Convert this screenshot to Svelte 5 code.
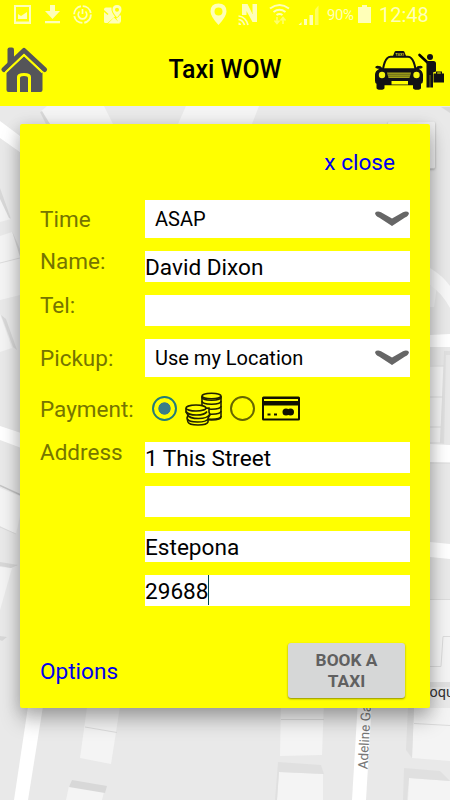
<script lang="ts">
  let time = 'ASAP';
  let name = 'David Dixon';
  let tel = '';
  let pickup = 'Use my Location';
  let payment = 'cash';
  let address = ['1 This Street', '', 'Estepona', '29688'];
  const activeLine = 3;

  const coins = [24, 19, 14, 9, 5];

  // city blocks and streets, in screen coordinates
  const blocks = [
    '40,112 47,106 104,106 113,124 50,124',
    '186,106 259,106 252,124 178,124',
    '0,197 11,219 0,222',
    '0,236 12,232 24,262 24,294 0,300',
    '0,314 12,348 0,352',
    '0,488 24,498 16,534 0,526',
    '0,567 12,568 0,610',
    '88,700 121,700 111,764 80,758',
    '69,786 104,792 102,800 66,800',
    '281,700 324,700 322,755 280,756',
    '279,772 323,774 323,800 277,800',
    '414,708 450,708 450,761 412,758',
    '409,778 450,781 450,800 408,800',
    '430,600 450,600 450,682 430,682',
    '430,365 444,366 440,442 430,442',
    '425,285 437,286 434,307 425,307'
  ];
  const shades = [
    '40,112 42,111 50,124 46,124',
    '0,188 11,219 9,218 0,199',
    '12,231 24,258 24,270',
    '1,315 6,319 17,350 13,347',
    '0,562 18,565 11,568 0,566',
    '0,636 7,637 2,641 0,640',
    '72,780 107,786 105,793 69,787',
    '441,107 450,107 450,113'
  ];
  const softShades = [
    '278,762 321,765 324,774 279,772 277,800 275,800',
    '404,768 440,771 450,781 409,778 407,800 403,800',
    '408,708 414,708 412,758 406,750',
    '444,351 450,351 450,355 446,355 444,444 440,443',
    '430,682 450,682 450,687 430,687'
  ];
  const streets = [
    '0,121 24,139 24,155 0,138',
    '0,426 24,434 24,449 0,440',
    '29,700 44,700 28,800 14,800',
    '358,700 372,700 366,800 352,800',
    '430,335 450,334 450,347 430,347',
    '430,444 450,445 450,463 430,462',
    '430,542 450,544 450,559 430,557'
  ];
</script>

<div class="screen">
  <svg class="map" viewBox="0 0 450 800">
    <rect width="450" height="800" fill="#e9e9e9" />
    {#each blocks as points}
      <polygon {points} fill="#f4f4f4" />
    {/each}
    {#each shades as points}
      <polygon {points} fill="#d8d8d8" />
    {/each}
    {#each softShades as points}
      <polygon {points} fill="#e0e0e0" />
    {/each}
    {#each streets as points}
      <polygon {points} fill="#fff" />
    {/each}
    <path d="M430 268q13 8 20 18v22q-8-15-20-23z" fill="#f8f8f8" />
    <path
      d="M85 727l32 5.500M281 719.500h43M414 723.500l36 2M430 599.500h20M450 636.500h-7l-2 30h-11M0 527l16 7M0 263l24-6M430 366h14M430 397h13M430 427h11M430 463h20"
      fill="none" stroke="#dcdcdc"
    />
    <path d="M0 485.500l24 11" stroke="#c4c4c4" stroke-width="1.500" />
    <rect class="map-btn" x="388" y="121.500" width="47" height="47" rx="1.500" />
    <text class="place" x="429.500" y="697">oqu</text>
    <text class="road" transform="translate(367.500 769.500) rotate(-87)">Adeline Gardens</text>
  </svg>

  <header>
    <div class="status-bar">
      <svg class="notifications" width="125" height="28" viewBox="0 0 125 28" fill="#ffffb8">
        <path fill-rule="evenodd" d="M14 5h17v19H14zM16 7v14.500h13V7z" />
        <path d="M18 19v-5l3 2 6-4v7z" />
        <path d="M50 5h5v6h5l-7.500 8-7.500-8h5zM45 21h15v2.200H45z" />
        <circle cx="82.500" cy="14.500" r="8.400" fill="none" stroke="#ffffb8" stroke-width="1.900" stroke-dasharray="11.300 1.900" />
        <path d="M79.500 11.500a4.300 4.300 0 1 0 6 0M82.500 9v5" fill="none" stroke="#ffffb8" stroke-width="1.700" />
        <path fill-rule="evenodd" d="M106 7.500h5.500q-.5 5 3.500 9l-7.500 6.500h-2q-1.500 0-1.500-1.500V9.500q0-2 2-2zM104 10v2l3.500 3 1-1z" />
        <path d="M108 23.500l6-6 6 6zM116 18q1.500 1 4-3l1 1v5q0 2-2 2z" />
        <path fill-rule="evenodd" d="M117 5q4.500 0 4.500 4.500 0 3-4.500 8-4.500-5-4.500-8Q112.500 5 117 5zm0 2.800a2 2 0 1 0 0 4 2 2 0 0 0 0-4z" />
      </svg>
      <svg class="signals" width="115" height="28" viewBox="210 0 115 28" fill="#ffffb8">
        <path fill-rule="evenodd" d="M218.500 3.500q8 0 8 8 0 5-8 13.500-8-8.500-8-13.500 0-8 8-8zm0 4a4 4 0 1 0 0 8 4 4 0 0 0 0-8z" />
        <path d="M242 4h5.500l5 10V4h4.500v18h-4.500l-6-11v4H242z" />
        <path d="M238.500 16q7.500 1 9.500 9M238.500 19.500q4.500.5 6 5.500" fill="none" stroke="#ffffb8" stroke-width="1.700" />
        <path d="M238.500 22.500q2.500 0 2.500 2.500h-2.500z" />
        <path d="M270 8.500q9.500-7 19 0M273.500 12q6-4.500 12 0M276.500 15q3-2.200 6 0" fill="none" stroke="#ffffb8" stroke-width="2" />
        <path d="M277 17v6M274.500 20.500l2.500 3 2.500-3M283 24v-6M280.500 20.500l2.500-3 2.500 3" fill="none" stroke="#ffff6a" stroke-width="1.600" />
        <path d="M298.500 25l3-3v3zM304 19h3v6h-3zM309.500 15h3.500v10h-3.500z" />
        <path d="M315 9.500l3.500-4V25H315z" opacity=".5" />
      </svg>
      <span class="percent">90%</span>
      <svg class="battery" width="13" height="20" viewBox="0 0 13 20" fill="#ffffb8">
        <path d="M4 1h5v2h4v16H0V3h4z" />
      </svg>
      <span class="clock">12:48</span>
    </div>

    <div class="title-bar">
      <svg width="48" height="48" viewBox="0 0 48 48">
        <path d="M7.500 18V3.500q0-2 2-2h2.500q2 0 2 2v9z" fill="#555559" />
        <path d="M4 23.500L24 4.500l20.500 19" fill="none" stroke="#555559" stroke-width="5" stroke-linecap="round" stroke-linejoin="round" />
        <path d="M6.500 26.500L24 10l18.500 16.500V44q0 2-2 2H31V31q0-4-7-4t-7 4v15H8.500q-2 0-2-2z" fill="#555559" />
        <path d="M5.500 26.500L24 9l18.500 17.500" fill="none" stroke="#ffff00" stroke-width="2" />
        <path d="M18 46V32q0-4 6-4t6 4v14z" fill="#ffff00" />
        <path d="M20 46V32q0-2 4-2t4 2v14z" fill="#555559" />
      </svg>
      <h1>Taxi WOW</h1>
      <svg class="cab" width="72" height="42" viewBox="373 49 72 42">
        <path d="M393 56l1.500-4q.3-1 1.500-1h7q1.200 0 1.500 1l1.500 4z" />
        <text x="399.500" y="55.500" class="cab-sign">TAXI</text>
        <path class="window" d="M383 69q1.500-8.500 4.500-11 1-1.300 3-1.300h17.500q2 0 3 1.300 3 2.500 4.500 11" />
        <path d="M375.300 67.500q0-1.700 2-1.700 3.700 0 5.200 2.400h33q1.500-2.400 5.200-2.400 2 0 2 1.700-1 1.300-4 1.300 4 2 4.300 6v6q0 2.500-2 3v4q0 2-4 2t-4-2v-2.500h-28.500v2.500q0 2-4 2t-4-2v-4q-1.500-.5-1.500-3v-6q0-4 4.500-6-4-.2-4.200-1.300z" />
        <path d="M387 72.500h24l-1.500 5.500h-21z" fill="#a5a51a" />
        <path d="M387.500 74.300h23M388 76.200h22" stroke="#55551a" stroke-width=".7" />
        <circle cx="382" cy="75" r="3.200" fill="#f5f510" />
        <circle cx="416.500" cy="75" r="3.200" fill="#f5f510" />
        <path d="M391.500 81h16.500v3.500h-16.500z" fill="#ffff00" />
        <circle cx="430" cy="57" r="3" />
        <path d="M419.500 55l8 7.500" fill="none" stroke="#000" stroke-width="2.600" stroke-linecap="round" />
        <path d="M426.500 61h7q2.500 0 2.500 2.500v8l-3 1v15h-2.800V75h-.4v12.500h-3.300z" />
        <path fill-rule="evenodd" d="M435 73.500h-1.500v9H444v-9h-2v-2h-6v2zm2.200 0v-1h3.600v1z" />
      </svg>
    </div>
  </header>

  <main class="card">
    <div class="close-row">
      <a href="#close">x close</a>
    </div>

    <form>
      <div class="row tall">
        <label for="time">Time</label>
        <div class="select" id="time">
          <span>{time}</span>
          <svg width="34" height="18" viewBox="0 0 34 18">
            <path d="M0 3q2-2.500 6-.8L17 8.500l11-6.300q4-1.700 6 .8-.5 3-4 4.500L17 16 4 7.500Q.5 6 0 3z" />
          </svg>
        </div>
      </div>

      <div class="row">
        <label for="name">Name:</label>
        <div class="input" id="name">{name}</div>
      </div>

      <div class="row">
        <label for="tel">Tel:</label>
        <div class="input" id="tel">{tel}</div>
      </div>

      <div class="row tall">
        <label for="pickup">Pickup:</label>
        <div class="select" id="pickup">
          <span>{pickup}</span>
          <svg width="34" height="18" viewBox="0 0 34 18">
            <path d="M0 3q2-2.500 6-.8L17 8.500l11-6.300q4-1.700 6 .8-.5 3-4 4.500L17 16 4 7.500Q.5 6 0 3z" />
          </svg>
        </div>
      </div>

      <div class="row payment">
        <span class="label">Payment:</span>
        <button type="button" class="radio" class:checked={payment === 'cash'} aria-label="Cash" on:click={() => payment = 'cash'}></button>
        <svg class="coins" width="37" height="34" viewBox="0 0 37 34">
          <path d="M17 4v21q0 3 9.500 3t9.500-3V4" class="stack" />
          {#each coins as y}
            <path d="M17 {y}q0 3.200 9.500 3.200T36 {y}" />
          {/each}
          <ellipse cx="26.500" cy="4" rx="9.500" ry="2.800" />
          <path class="stack" d="M1 17v3l2 3-1 3 1 4q1 3 10 3t10-3v-4l2-3-1-3v-4z" />
          <path d="M2.500 27q1 3 10 3t10.500-3M2.500 23q2 3.500 11 3.500t11-4M1 19.500q2 3.500 10.500 3.500t10.500-3.500" />
          <ellipse cx="11" cy="16" rx="10" ry="3" class="stack" />
        </svg>
        <button type="button" class="radio" class:checked={payment === 'card'} aria-label="Card" on:click={() => payment = 'card'}></button>
        <svg class="credit" width="38" height="25" viewBox="0 0 38 25">
          <path fill-rule="evenodd" d="M1.500.5h35q1.500 0 1.500 1.500v21q0 1.500-1.500 1.500h-35Q0 24.500 0 23V2Q0 .5 1.500.5zM2 3v2h34V3zM2 9.500v13h34v-13z" />
          <path d="M5.500 17.500h3v2h-3zM12 17.500h3v2h-3z" />
          <circle cx="24" cy="16" r="3.500" />
          <circle cx="28.500" cy="16" r="3.500" />
        </svg>
      </div>

      <div class="row">
        <span class="label">Address</span>
        <div class="lines">
          {#each address as line, i}
            <div class="input" class:focused={i === activeLine}>{line}</div>
          {/each}
        </div>
      </div>
    </form>

    <footer>
      <a href="#options">Options</a>
      <button class="book">BOOK A TAXI</button>
    </footer>
  </main>
</div>

<style>
  :global(body) {
    margin: 0;
    font-family: Roboto, "Liberation Sans", sans-serif;
    background: #e9e9e9;
  }

  .screen {
    position: relative;
    width: 450px;
    height: 800px;
    overflow: hidden;
  }

  .map {
    position: absolute;
    inset: 0;
    width: 450px;
    height: 800px;
  }

  .map-btn {
    fill: #f0f0f0;
    filter: drop-shadow(0 1px 1px rgba(0, 0, 0, 0.3));
  }

  .place {
    font-size: 14.5px;
    fill: #333;
  }

  .road {
    font-size: 13.5px;
    fill: #777;
  }

  header {
    position: relative;
    height: 106px;
    background: #ffff00;
  }

  .status-bar {
    display: flex;
    align-items: flex-start;
    height: 30px;
    color: #ffffb8;
  }

  .signals {
    margin-left: 85px;
  }

  .percent {
    width: 29px;
    margin: 6px 0 0 2px;
    font-size: 15px;
    line-height: 18px;
    letter-spacing: -0.4px;
  }

  .battery {
    margin: 4px 0 0 2px;
  }

  .clock {
    margin: 3px 0 0 8px;
    font-size: 20px;
    line-height: 24px;
  }

  .title-bar {
    display: flex;
    align-items: center;
    justify-content: space-between;
    height: 76px;
    padding-right: 5px;
    box-sizing: border-box;
  }

  .title-bar svg {
    margin-top: 4px;
  }

  .cab {
    fill: #111115;
  }

  .window {
    fill: #ffff00;
    stroke: #111115;
    stroke-width: 2;
  }

  h1 {
    margin: 2px 0 0 29px;
    font-size: 24.9px;
    font-weight: 500;
    color: #000;
  }

  .cab-sign {
    font-size: 4px;
    font-weight: 700;
    text-anchor: middle;
    fill: #d8d823;
  }

  .card {
    position: relative;
    width: 410px;
    height: 584.5px;
    margin: 17.5px 20px 0;
    padding: 0 20px;
    box-sizing: border-box;
    border-radius: 2px;
    background: #ffff00;
    box-shadow: 0 12px 20px rgba(0, 0, 0, 0.26), 0 2px 16px rgba(0, 0, 0, 0.16);
  }

  a {
    color: #0000ee;
    font-size: 22.6px;
    line-height: 26px;
    text-decoration: none;
  }

  .close-row {
    display: flex;
    justify-content: flex-end;
    height: 76.5px;
    padding: 26px 15px 0 0;
    box-sizing: border-box;
  }

  form {
    display: flex;
    flex-direction: column;
    gap: 13px;
  }

  .row {
    display: grid;
    grid-template-columns: 105px 265px;
    align-items: start;
  }

  label,
  .label {
    margin-top: -3px;
    font-size: 22.5px;
    line-height: 26px;
    color: #757500;
  }

  .tall label {
    margin-top: 5.5px;
  }

  .select {
    display: flex;
    align-items: center;
    justify-content: space-between;
    height: 38px;
    padding-left: 10px;
    box-sizing: border-box;
    background: #fff;
    color: #000;
    font-size: 20px;
  }

  .select svg {
    margin-right: 1px;
  }

  .select path {
    fill: #666;
  }

  .input {
    height: 31px;
    background: #fff;
    color: #000;
    font-size: 22.6px;
    line-height: 34px;
  }

  .focused {
    display: flex;
    line-height: 33px;
  }

  .focused::after {
    content: '';
    width: 1.5px;
    height: 30px;
    margin-left: -1px;
    background: #00474f;
  }

  .lines {
    display: flex;
    flex-direction: column;
    gap: 13.3px;
  }

  .payment {
    display: flex;
    align-items: center;
    height: 39px;
  }

  .payment .label {
    width: 112px;
    margin-top: -1px;
  }

  .radio {
    width: 25px;
    height: 25px;
    margin-top: -2px;
    padding: 0;
    border: 2px solid #666600;
    border-radius: 50%;
    background: transparent;
  }

  .radio.checked {
    border-color: #237c78;
    background: radial-gradient(circle, #397d87 0 5.8px, transparent 6.5px);
  }

  .coins {
    margin: -2px 8px 0;
    fill: none;
    stroke: #222200;
    stroke-width: 1.6;
  }

  .coins .stack {
    fill: #ffff00;
  }

  .credit {
    margin: -2px 0 0 7px;
    fill: #111100;
  }

  footer {
    display: flex;
    align-items: flex-start;
    justify-content: space-between;
    padding: 37.5px 5px 0 0;
  }

  footer a {
    margin-top: 15.5px;
  }

  .book {
    width: 117px;
    height: 55px;
    padding: 0 20px;
    border: 0;
    border-radius: 3px;
    background: #d6d7d7;
    box-shadow: 0 1px 2px rgba(0, 0, 0, 0.45);
    color: #606060;
    font-family: inherit;
    font-size: 17.3px;
    font-weight: 700;
    line-height: 20.5px;
  }
</style>
